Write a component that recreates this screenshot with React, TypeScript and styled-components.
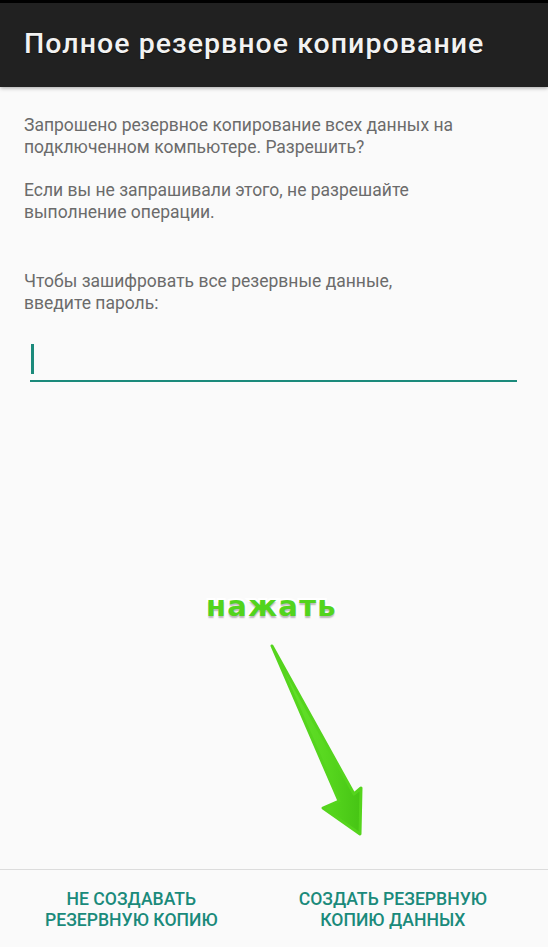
import React from "react";
import styled, { createGlobalStyle } from "styled-components";

const GlobalStyle = createGlobalStyle`
  html, body { margin: 0; padding: 0; background: #fafafa; }
  body { font-family: Roboto, "Noto Sans", sans-serif; }
  * { box-sizing: border-box; }
`;

const Screen = styled.div`
  position: relative;
  width: 548px;
  height: 947px;
  display: flex;
  flex-direction: column;
  background: #fafafa;
  overflow: hidden;
`;

const StatusStrip = styled.div`
  height: 3px;
  background: #000;
  flex: none;
`;

const TitleBar = styled.header`
  height: 84px;
  flex: none;
  display: flex;
  align-items: center;
  padding: 0 24px 4px;
  background: #212121;
  box-shadow: 0 1px 4px rgba(0, 0, 0, 0.35);
  position: relative;
  z-index: 1;
`;

const Title = styled.h1`
  margin: 0;
  font-family: Roboto, sans-serif;
  font-weight: 500;
  font-size: 28.5px;
  color: #f2f2f2;
  letter-spacing: 1.05px;
  text-shadow: 0 1px 1px rgba(0, 0, 0, 0.5);
`;

const Content = styled.main`
  flex: 1;
  display: flex;
  flex-direction: column;
  padding: 27px 24px 0;
`;

const Paragraph = styled.p<{ $gap: number }>`
  margin: 0 0 ${(p) => p.$gap}px;
  font-size: 17.5px;
  line-height: 22px;
  color: #6b6b6b;
  white-space: nowrap;
`;

const PasswordField = styled.div`
  margin: 30px 7px 0 6px;
  height: 38px;
  border-bottom: 2.5px solid #1b8a7b;
  display: flex;
  align-items: flex-start;
`;

const Caret = styled.span`
  display: block;
  width: 2.5px;
  height: 30px;
  margin-left: 1px;
  background: #1b8a7b;
`;

const ButtonBar = styled.footer`
  flex: none;
  height: 78px;
  border-top: 1px solid #dcdcdc;
  display: flex;
  align-items: center;
  justify-content: space-between;
  padding: 2px 61px 0 45px;
`;

const DialogButton = styled.button`
  border: 0;
  background: transparent;
  padding: 0;
  font-family: Roboto, sans-serif;
  font-weight: 500;
  font-size: 17.6px;
  line-height: 21px;
  color: #1a8a7b;
  text-align: center;
  text-transform: uppercase;
`;

const Hint = styled.div`
  position: absolute;
  left: 206px;
  top: 592px;
  font-family: "DejaVu Sans", Verdana, sans-serif;
  font-weight: 700;
  font-size: 29px;
  line-height: 29px;
  letter-spacing: 1.3px;
  color: #52d41d;
  -webkit-text-stroke: 4px #ffffff;
  paint-order: stroke fill;
  text-shadow: 0 2px 1.5px rgba(0, 0, 0, 0.28);
`;

const ArrowLayer = styled.svg`
  position: absolute;
  left: 260px;
  top: 635px;
  width: 115px;
  height: 210px;
  overflow: visible;
`;

export default function App() {
  return (
    <>
      <GlobalStyle />
      <Screen>
        <StatusStrip />
        <TitleBar>
          <Title>Полное резервное копирование</Title>
        </TitleBar>
        <Content>
          <Paragraph $gap={21}>
            Запрошено резервное копирование всех данных на
            <br />
            подключенном компьютере. Разрешить?
          </Paragraph>
          <Paragraph $gap={47}>
            Если вы не запрашивали этого, не разрешайте
            <br />
            выполнение операции.
          </Paragraph>
          <Paragraph $gap={0}>
            Чтобы зашифровать все резервные данные,
            <br />
            введите пароль:
          </Paragraph>
          <PasswordField>
            <Caret />
          </PasswordField>
        </Content>
        <ButtonBar>
          <DialogButton>
            Не создавать
            <br />
            резервную копию
          </DialogButton>
          <DialogButton>
            Создать резервную
            <br />
            копию данных
          </DialogButton>
        </ButtonBar>
        <Hint>нажать</Hint>
        <ArrowLayer viewBox="0 0 115 210">
          <defs>
            <linearGradient id="arrowFill" x1="0" y1="0" x2="1" y2="0">
              <stop offset="0" stopColor="#6ae332" />
              <stop offset="0.6" stopColor="#58d81f" />
              <stop offset="1" stopColor="#46c414" />
            </linearGradient>
          </defs>
          <path
            d="M12 11 L94 159 L101 153 L100 199 L63 173 L79 166 Z"
            fill="url(#arrowFill)"
            stroke="#55d41d"
            strokeWidth="3"
            strokeLinejoin="round"
          />
        </ArrowLayer>
      </Screen>
    </>
  );
}
